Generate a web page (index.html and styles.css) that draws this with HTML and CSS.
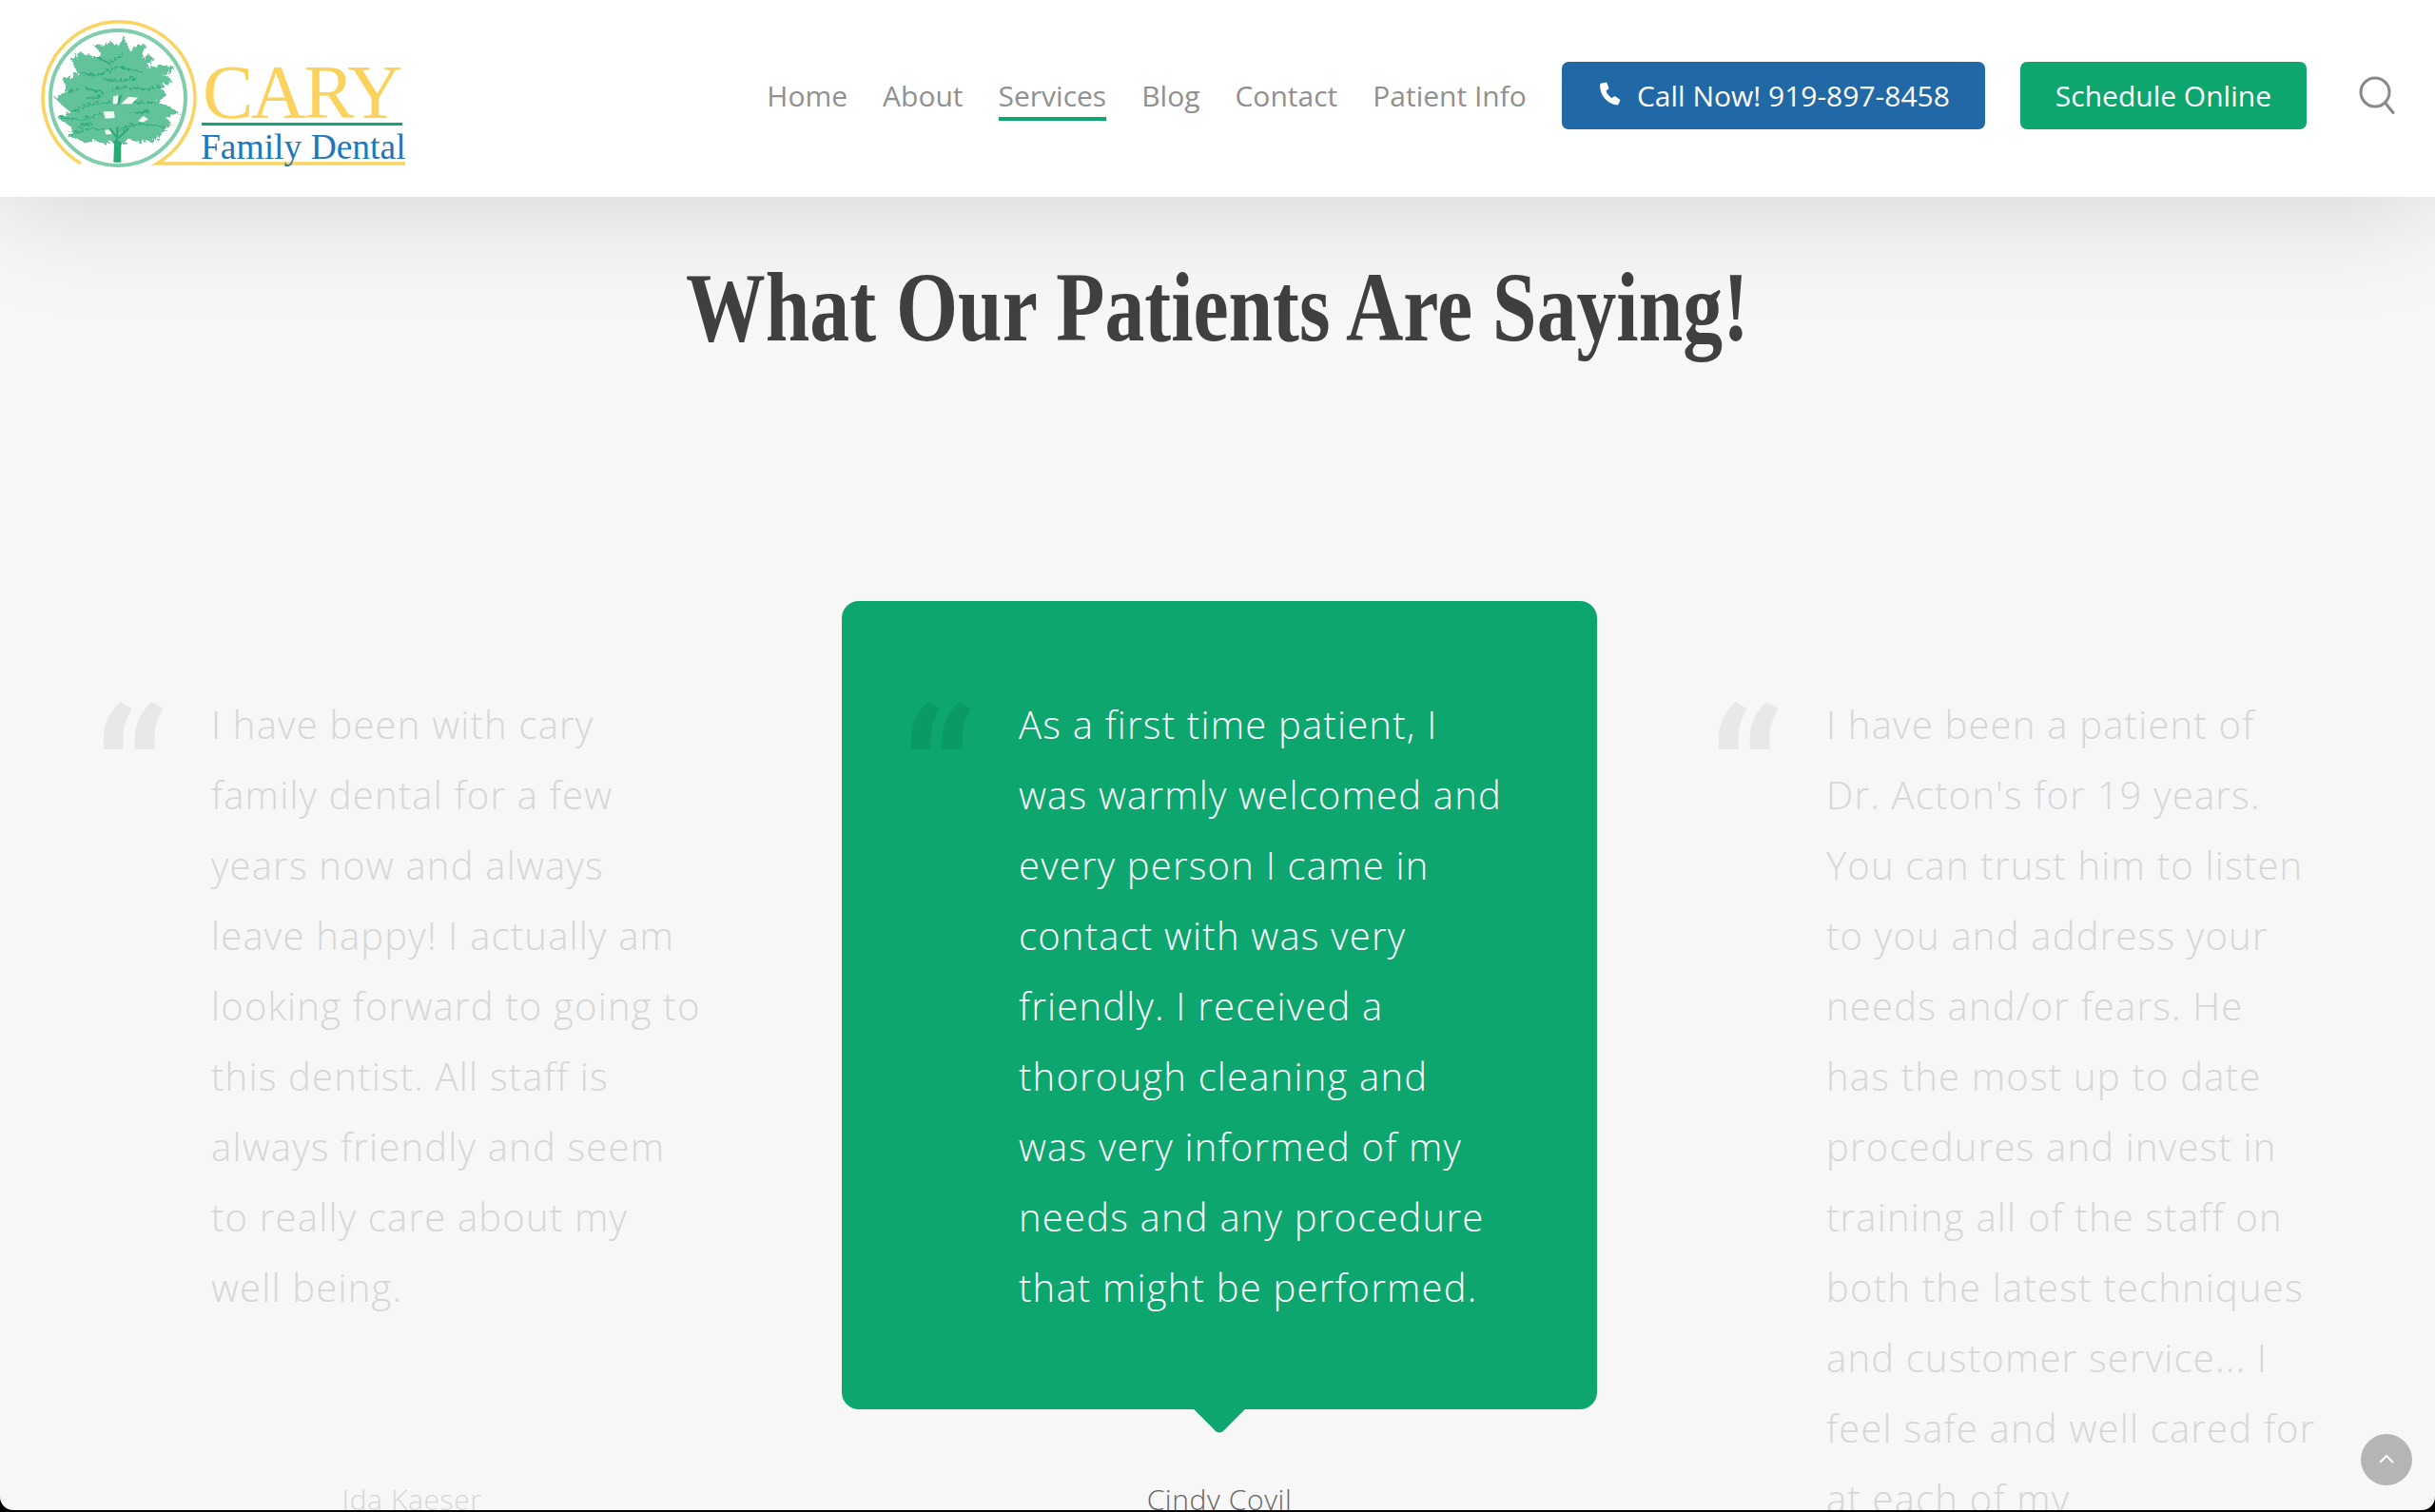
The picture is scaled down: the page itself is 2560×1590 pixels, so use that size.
FILE: index.html
```html
<!DOCTYPE html>
<html lang="en">
<head>
<meta charset="utf-8">
<title>Cary Family Dental</title>
<link rel="stylesheet" href="styles.css">
</head>
<body>
<div class="page">
  <header class="site-header">
    <a class="logo" href="#" aria-label="Cary Family Dental">
      <svg class="logo-svg" viewBox="0 0 430 207" width="430" height="207">
        <defs>
          <filter id="rough" x="-5%" y="-5%" width="110%" height="110%">
            <feTurbulence type="fractalNoise" baseFrequency=".09" numOctaves="2" seed="4"/>
            <feDisplacementMap in="SourceGraphic" scale="22"/>
          </filter>
        </defs>
        <path class="logo-arc" d="M85 172 A80 80 0 1 1 165 172 L426 172"/>
        <circle class="logo-ring" cx="124" cy="103" r="71"/>
        <g transform="translate(40 20) scale(.3333)">
          <path class="tree-trunk" d="M238 452 L240 395 L222 365 L240 372 L255 385 L275 365 L262 400 L262 452Z"/>
          <g filter="url(#rough)">
            <path class="tree-leaf" d="M270 50 L280 80 L290 100 L312 84 L340 82 L330 104 L328 124 L350 112 L368 128 L350 142 L342 154 L388 146 L434 150 L408 168 L392 176 L414 184 L424 202 L400 206 L382 218 L400 228 L404 244 L386 250 L378 264 L412 276 L446 296 L420 304 L398 314 L414 320 L422 334 L404 342 L396 358 L380 372 L360 392 L340 380 L320 392 L295 378 L270 392 L240 380 L210 396 L180 382 L150 392 L125 378 L90 368 L108 352 L104 340 L84 328 L60 310 L86 302 L98 290 L76 272 L50 246 L76 238 L88 226 L86 208 L76 190 L106 182 L124 170 L116 150 L106 128 L120 118 L130 102 L152 114 L176 116 L188 120 L198 110 L190 98 L176 84 L205 82 L232 72 L245 86 L255 84 L262 70Z"/>
            <path class="tree-shade" d="M96 230 L130 222 M150 218 L205 232 M230 226 L270 214 L340 222 L385 212 M108 292 L160 270 L230 262 M300 262 L372 264 M72 312 L140 318 L200 300 M100 364 L160 345 L230 352 M250 350 L320 330 L400 342 M130 172 L190 178 L250 150 L330 168 M185 120 L225 140 L270 110 M205 190 L260 195 L310 185 M150 250 L200 245 M120 340 L170 330 M290 300 L350 290"/>
          </g>
          <path class="tree-hole" d="M238 244 L252 240 L252 268 L236 268Z M262 268 L285 245 L315 248 L295 268Z M206 292 L240 292 L242 312 L212 314Z M316 322 L332 306 L348 316 L330 326Z M210 350 L232 348 L232 364 L214 364Z"/>
          <path class="tree-branch" d="M250 395 L250 340 M250 375 L225 345 M255 375 L285 345 M252 270 L262 240"/>
        </g>
        <text class="logo-cary" x="213" y="124">CARY</text>
        <rect class="logo-rule" x="212" y="129" width="211" height="3"/>
        <text class="logo-family" x="211" y="167">Family Dental</text>
      </svg>
    </a>
    <nav class="main-nav">
      <a class="nav-link" href="#">Home</a>
      <a class="nav-link" href="#">About</a>
      <a class="nav-link is-current" href="#">Services</a>
      <a class="nav-link" href="#">Blog</a>
      <a class="nav-link" href="#">Contact</a>
      <a class="nav-link" href="#">Patient Info</a>
      <a class="btn btn-blue" href="#">
        <svg class="btn-icon" viewBox="0 0 24 24" width="28" height="28"><path d="M5 2.2 L8.6 1.4 C9.2 1.3 9.7 1.6 9.9 2.1 L11.4 6.3 C11.6 6.8 11.4 7.3 11 7.6 L9 9.1 C9.9 11.6 11.7 14 14.2 15.6 L16.1 14.1 C16.5 13.8 17 13.8 17.4 14.1 L21.2 16.7 C21.7 17 21.8 17.5 21.6 18 L20.2 21 C19.9 21.7 19.2 22 18.5 21.9 C9.8 20.6 3.5 13 3.5 4.1 C3.5 3.2 4.1 2.4 5 2.2Z"/></svg>
        <span>Call Now! 919-897-8458</span>
      </a>
      <a class="btn btn-green" href="#">Schedule Online</a>
      <a class="search" href="#" aria-label="Search">
        <svg viewBox="0 0 38 40" width="38" height="40"><circle cx="17" cy="17" r="15"/><path d="M27.5 28 L36 38.5"/></svg>
      </a>
    </nav>
  </header>

  <main class="content">
    <h1 class="title">What Our Patients Are Saying!</h1>
    <section class="quotes">
      <article class="quote-col is-faded">
        <div class="quote-card">
          <span class="quote-mark">“</span>
          <p class="quote-text">I have been with cary family dental for a few years now and always leave happy! I actually am looking forward to going to this dentist. All staff is always friendly and seem to really care about my well being.</p>
        </div>
        <p class="quote-name">Ida Kaeser</p>
      </article>
      <article class="quote-col is-active">
        <div class="quote-card">
          <span class="quote-mark">“</span>
          <p class="quote-text">As a first time patient, I was warmly welcomed and every person I came in contact with was very friendly. I received a thorough cleaning and was very informed of my needs and any procedure that might be performed.</p>
        </div>
        <p class="quote-name">Cindy Covil</p>
      </article>
      <article class="quote-col is-faded">
        <div class="quote-card">
          <span class="quote-mark">“</span>
          <p class="quote-text">I have been a patient of Dr. Acton's for 19 years. You can trust him to listen to you and address your needs and/or fears. He has the most up to date procedures and invest in training all of the staff on both the latest techniques and customer service... I feel safe and well cared for at each of my appointments.</p>
        </div>
      </article>
    </section>
  </main>

  <a class="to-top" href="#" aria-label="Back to top">
    <svg viewBox="0 0 18 12" width="18" height="12"><path d="M2 10 L9 3 L16 10"/></svg>
  </a>
</div>
</body>
</html>
```
FILE: styles.css
```css
* { box-sizing: border-box; }
html, body { margin: 0; height: 100%; }
body {
  background: #000;
  font-family: "Open Sans", "Liberation Sans", sans-serif;
  overflow: hidden;
}
a { text-decoration: none; color: inherit; }

.page {
  position: relative;
  height: 1588px;
  background: #f7f7f7;
  border-radius: 0 0 14px 14px;
  overflow: hidden;
}

/* Header */
.site-header {
  position: relative;
  z-index: 2;
  height: 207px;
  display: flex;
  justify-content: space-between;
  align-items: flex-start;
  padding-right: 42px;
  background: #fff;
  box-shadow: 0 0 130px rgba(0, 0, 0, .17);
}
.logo { display: block; height: 207px; }
.logo-svg { display: block; }
.logo-arc { fill: none; stroke: #fbd35f; stroke-width: 3.5; }
.logo-ring { fill: none; stroke: #80cdab; stroke-width: 4; }
.tree-leaf { fill: #62c29a; }
.tree-shade { fill: none; stroke: #2fab7a; stroke-width: 5; stroke-linejoin: round; }
.tree-hole { fill: #f4fbf7; }
.tree-trunk { fill: #2aa876; }
.tree-branch { fill: none; stroke: #2aa876; stroke-width: 6; }
.logo-cary { font-family: "Liberation Serif", serif; font-size: 80px; letter-spacing: -2.5px; fill: #fbd35c; }
.logo-rule { fill: #12a574; }
.logo-family { font-family: "Liberation Serif", serif; font-size: 37.5px; fill: #1f76bb; }

.main-nav {
  display: flex;
  align-items: center;
  gap: 37px;
  height: 71px;
  margin-top: 65px;
  font-size: 30px;
  color: #909090;
}
.nav-link {
  position: relative;
  line-height: 71px;
}
.is-current::after {
  content: "";
  position: absolute;
  left: 0;
  right: 0;
  bottom: 9px;
  height: 4px;
  background: #0ca66e;
}
.btn {
  display: flex;
  align-items: center;
  height: 71px;
  padding: 0 37px;
  border-radius: 7px;
  color: #fff;
}
.btn-blue { background: #2069a6; gap: 15px; padding-left: 36px; }
.btn-green { background: #0ca66e; }
.btn-icon { fill: #fff; margin-top: -4px; }
.search { display: block; line-height: 0; margin-top: -1px; margin-left: 18px; }
.search svg { fill: none; stroke: #888; stroke-width: 3; stroke-linecap: round; }

/* Testimonials */
.content { padding-top: 56px; }
.title {
  margin: 0;
  text-align: center;
  font-family: "Liberation Serif", serif;
  font-size: 104px;
  line-height: 120px;
  font-weight: 700;
  color: #404040;
  transform: scaleX(.805);
}
.quotes {
  display: grid;
  grid-template-columns: repeat(3, 794px);
  gap: 55px;
  padding-left: 36px;
  margin-top: 249px;
  align-items: start;
}
.quote-card {
  position: relative;
  padding: 93px 91px 91px 186px;
  border-radius: 18px;
}
.quote-text {
  margin: 0;
  font-size: 40px;
  font-weight: 300;
  line-height: 74px;
  letter-spacing: 1.2px;
}
.quote-mark {
  position: absolute;
  left: 62px;
  top: 90px;
  font-family: Roboto, sans-serif;
  font-size: 205px;
  line-height: 1;
  font-weight: 500;
}
.quote-name {
  margin: 73px 0 0;
  text-align: center;
  font-size: 30px;
  font-weight: 300;
  line-height: 44px;
  letter-spacing: .6px;
}
.is-active .quote-card { background: #0ca66e; color: #fff; padding-right: 100px; }
.is-active .quote-mark { color: #0a9a66; }
.is-active .quote-name { color: #666; }
.is-active .quote-card::after {
  content: "";
  position: absolute;
  left: 50%;
  bottom: -19px;
  width: 38px;
  height: 38px;
  margin-left: -19px;
  background: #0ca66e;
  border-bottom-right-radius: 6px;
  transform: rotate(45deg);
}
.is-faded .quote-text { color: #d6d6d6; }
.is-faded .quote-mark { color: #e8e8e8; }
.is-faded .quote-name { color: #d6d6d6; }

.to-top {
  position: absolute;
  left: 2482px;
  top: 1508px;
  width: 54px;
  height: 54px;
  display: flex;
  align-items: center;
  justify-content: center;
  border-radius: 50%;
  background: #b5b5b5;
}
.to-top svg { fill: none; stroke: #fff; stroke-width: 2; margin-bottom: 2px; }
```
